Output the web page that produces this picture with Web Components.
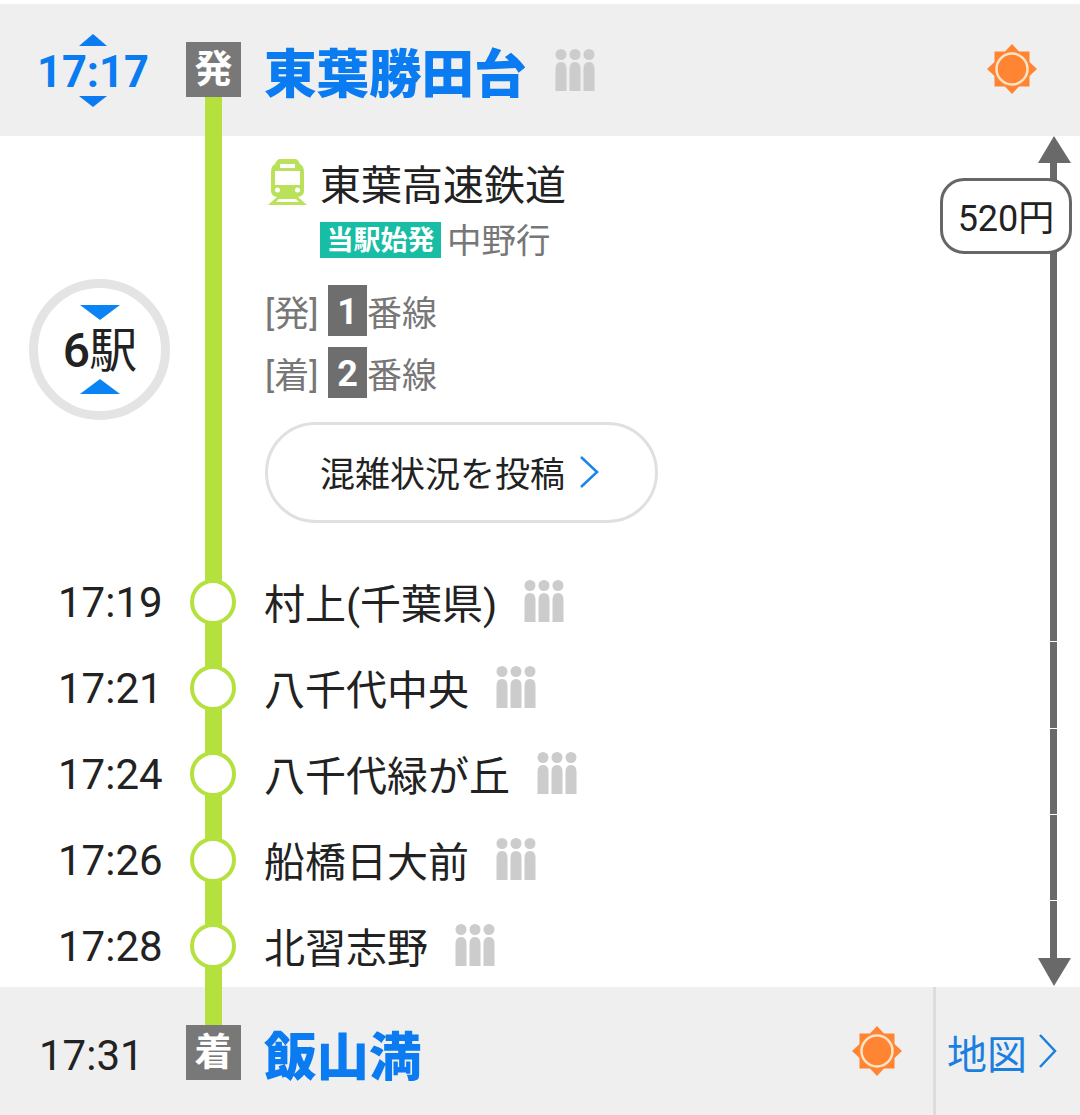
<!DOCTYPE html>
<html lang="ja">
<head>
<meta charset="utf-8">
<title>経路</title>
<style>
  html, body { margin: 0; background: #fff; }
  body { font-family: Roboto, "Noto Sans CJK JP", sans-serif; color: #222; }
</style>
</head>
<body>
<route-view>
  <station-bar kind="dep" time="17:17" badge="発" name="東葉勝田台" crowd></station-bar>
  <line-detail slot="body"></line-detail>
  <stop-row slot="body" time="17:19" name="村上(千葉県)"></stop-row>
  <stop-row slot="body" time="17:21" name="八千代中央"></stop-row>
  <stop-row slot="body" time="17:24" name="八千代緑が丘"></stop-row>
  <stop-row slot="body" time="17:26" name="船橋日大前"></stop-row>
  <stop-row slot="body" time="17:28" name="北習志野"></stop-row>
  <station-bar slot="foot" kind="arr" time="17:31" badge="着" name="飯山満"></station-bar>
</route-view>

<script>
// iconos compartidos
const SUN_SVG = `<svg width="50" height="50" viewBox="0 0 50 50" aria-hidden="true">
  <path fill="#ff8533" d="M25 0l7 7.500h10.500V18L50 25l-7.500 7v10.500H32L25 50l-7-7.500H7.500V32L0 25l7.500-7V7.500H18z"/>
  <circle cx="25" cy="25" r="15.500" fill="#ff8533" stroke="#fde3c8" stroke-width="2.500"/>
</svg>`;

class PeopleIcon extends HTMLElement {
  constructor() {
    super();
    this.attachShadow({ mode: 'open' });
    this.shadowRoot.innerHTML = `
      <style>:host { display: inline-flex; width: 40px; height: 42px; } svg { display: block; }</style>
      <svg width="40" height="42" viewBox="0 0 40 42" aria-hidden="true" fill="#ccc">
        <circle cx="6" cy="5.500" r="5.500"/><circle cx="20" cy="5.500" r="5.500"/><circle cx="34" cy="5.500" r="5.500"/>
        <path d="M.5 42V20q0-7 5.500-7t5.500 7v22z"/>
        <path d="M14.500 42V20q0-7 5.500-7t5.500 7v22z"/>
        <path d="M28.500 42V20q0-7 5.500-7t5.500 7v22z"/>
      </svg>`;
  }
}
customElements.define('people-icon', PeopleIcon);

// Barra de estacion (salida y llegada)
class StationBar extends HTMLElement {
  constructor() {
    super();
    this.attachShadow({ mode: 'open' });
  }
  connectedCallback() {
    const dep = this.getAttribute('kind') === 'dep';
    this.shadowRoot.innerHTML = `
      <style>
        :host { display: flex; align-items: center; background: #efefef; box-sizing: border-box; }
        :host([kind="dep"]) { height: 132px; margin-top: 4px; }
        :host([kind="arr"]) { height: 128px; }
        .wrap { display: flex; align-items: flex-start; flex: 1; height: 100%; box-sizing: border-box; padding-top: 38px; }
        .time { width: 186px; flex: none; box-sizing: border-box; display: flex; flex-direction: column; align-items: center; }
        :host([kind="dep"]) .time { color: #0a7bf0; font-weight: 700; font-size: 43.500px; line-height: 48px; margin-top: -8px; }
        :host([kind="arr"]) .time { font-size: 42px; line-height: 56px; margin-top: 3px; align-items: flex-start; padding-left: 39px; }
        .tri { width: 0; height: 0; border-left: 14px solid transparent; border-right: 14px solid transparent; }
        .tri.up { border-bottom: 12px solid #0a7bf0; margin-bottom: 3px; }
        .tri.down { border-top: 11px solid #0a7bf0; margin-top: -1px; }
        .badge { width: 55px; height: 55px; flex: none; background: #787878; color: #fff; font-weight: 700; font-size: 38px; line-height: 55px; text-align: center; position: relative; z-index: 2; }
        .name { margin-left: 23px; color: #0a7bf0; font-weight: 900; font-size: 52.500px; line-height: 66px; white-space: nowrap; }
        people-icon { margin-left: 28px; margin-top: 7px; }
        .sun { margin-left: auto; display: flex; margin-top: 2px; margin-right: 43px; }
        :host([kind="arr"]) .sun { margin-right: 31px; margin-top: 1px; }
        .map { width: 147px; height: 128px; margin-top: -38px; box-sizing: border-box; border-left: 3px solid #ddd; color: #1a7fe0; font-size: 40px; display: flex; align-items: center; padding: 0 0 0 11px; gap: 11px; }
        .map span { margin-top: 2px; }
      </style>
      <div class="wrap">
        <div class="time">
          ${dep ? '<span class="tri up"></span>' : ''}
          <span>${this.getAttribute('time')}</span>
          ${dep ? '<span class="tri down"></span>' : ''}
        </div>
        <div class="badge">${this.getAttribute('badge')}</div>
        <div class="name">${this.getAttribute('name')}</div>
        ${dep ? '<people-icon></people-icon>' : ''}
        <div class="sun">${SUN_SVG}</div>
        ${dep ? '' : `<div class="map"><span>地図</span>
          <svg width="19" height="36" viewBox="0 0 19 36" aria-hidden="true"><path d="M2 2l15 16L2 34" fill="none" stroke="#1a7fe0" stroke-width="2.500"/></svg></div>`}
      </div>`;
  }
}
customElements.define('station-bar', StationBar);

// Bloque de tren, andenes y boton
class LineDetail extends HTMLElement {
  constructor() {
    super();
    this.attachShadow({ mode: 'open' });
    this.shadowRoot.innerHTML = `
      <style>
        :host { display: grid; grid-template-columns: 265px 1fr; height: 423px; }
        .left { display: flex; align-items: center; padding-left: 29px; padding-top: 4px; }
        .count { width: 141px; height: 141px; box-sizing: border-box; border: 9px solid #e4e4e4; border-radius: 50%; display: flex; flex-direction: column; align-items: center; justify-content: center; background: #fff; }
        .count b { font-weight: 400; font-size: 48px; line-height: 54px; letter-spacing: -1px; padding-top: 4px; height: 59px; box-sizing: border-box; }
        .count b span { font-weight: 500; }
        .tri { width: 0; height: 0; border-left: 20px solid transparent; border-right: 20px solid transparent; }
        .tri.down { border-top: 15px solid #0a84f5; }
        .tri.up { border-bottom: 15px solid #0a84f5; }
        .right { padding-top: 21px; }
        .train { display: flex; align-items: center; height: 50px; font-size: 41px; gap: 13px; margin-left: 3px; }
        .sub { display: flex; align-items: center; margin-left: 55px; height: 36px; margin-top: 15px; color: #777; font-size: 34.500px; gap: 8px; }
        .sub .to { margin-bottom: 4px; margin-left: -2px; }
        .tag { background: #17bda4; color: #fff; font-weight: 700; font-size: 27px; line-height: 38px; height: 36px; width: 121px; text-align: center; white-space: nowrap; }
        .plats { margin-top: 22px; color: #777; font-size: 35px; }
        .plat { display: flex; align-items: center; height: 62px; }
        .plat i { font-style: normal; width: 63px; margin-top: -2px; }
        .num { width: 39px; height: 51px; margin-top: -1px; background: #6e6e6e; color: #fff; font-weight: 700; font-size: 36px; line-height: 55px; text-align: center; margin-right: 1px; }
        .lbl { margin-left: -1px; margin-top: -2px; }
        .btn { display: flex; align-items: center; width: 393px; height: 101px; margin-top: 18px; box-sizing: border-box; border: 3px solid #e0e0e0; border-radius: 51px; padding: 0 0 2px 52px; font-size: 35px; gap: 14px; white-space: nowrap; }
      </style>
      <div class="left">
        <div class="count">
          <span class="tri down"></span>
          <b><span>6</span>駅</b>
          <span class="tri up"></span>
        </div>
      </div>
      <div class="right">
        <div class="train">
          <svg width="39" height="46" viewBox="0 0 39 46" aria-hidden="true">
            <path fill="#b9e25a" d="M12 0h15q3 0 5 5q4 2 4 8v19q0 5-6 6l9 8H0l9-8q-6-1-6-6V13q0-6 4-8q2-5 5-5z"/>
            <rect x="12" y="5" width="15" height="4" fill="#fff"/>
            <rect x="7" y="12" width="25" height="14" fill="#fff"/>
            <circle cx="9.500" cy="31" r="2.500" fill="#fff"/><circle cx="29.500" cy="31" r="2.500" fill="#fff"/>
            <path fill="#fff" d="M11 40h17l3 3H8z"/>
          </svg>
          <span>東葉高速鉄道</span>
        </div>
        <div class="sub"><span class="tag">当駅始発</span><span class="to">中野行</span></div>
        <div class="plats">
          <div class="plat"><i>[発]</i><span class="num">1</span><span class="lbl">番線</span></div>
          <div class="plat"><i>[着]</i><span class="num">2</span><span class="lbl">番線</span></div>
        </div>
        <div class="btn">
          <span>混雑状況を投稿</span>
          <svg width="20" height="34" viewBox="0 0 20 34" aria-hidden="true"><path d="M2 2l16 15L2 32" fill="none" stroke="#1a85e8" stroke-width="2.500"/></svg>
        </div>
      </div>`;
  }
}
customElements.define('line-detail', LineDetail);

// Fila de parada intermedia
class StopRow extends HTMLElement {
  constructor() {
    super();
    this.attachShadow({ mode: 'open' });
  }
  connectedCallback() {
    this.shadowRoot.innerHTML = `
      <style>
        :host { display: flex; align-items: center; height: 86px; }
        .time { width: 132px; margin-left: 58px; font-size: 42px; white-space: nowrap; }
        .node { width: 46px; height: 46px; flex: none; box-sizing: border-box; border: 4px solid #b5e13f; border-radius: 50%; background: #fff; position: relative; z-index: 2; }
        .name { margin-left: 28px; font-size: 41px; white-space: nowrap; margin-top: -3px; }
        people-icon { margin-left: 27px; margin-top: -3px; }
      </style>
      <div class="time">${this.getAttribute('time')}</div>
      <div class="node"></div>
      <div class="name">${this.getAttribute('name')}</div>
      <people-icon></people-icon>`;
  }
}
customElements.define('stop-row', StopRow);

// Flecha de tarifa, va encima del contenido
class FareArrow extends HTMLElement {
  constructor() {
    super();
    this.attachShadow({ mode: 'open' });
    const ticks = [505, 592, 678, 764].map(y => `<rect x="12" y="${y}" width="7" height="1" fill="#fff"/>`).join('');
    this.shadowRoot.innerHTML = `
      <style>
        :host { display: block; position: absolute; top: 136px; left: 1038px; width: 33px; height: 851px; z-index: 3; }
        svg { display: block; }
        .fare { position: absolute; top: 42px; right: -1px; width: 132px; height: 76px; box-sizing: border-box; border: 3px solid #666; border-radius: 24px; padding-bottom: 3px; background: #fff; font-size: 36px; display: flex; align-items: center; justify-content: center; white-space: nowrap; }
      </style>
      <svg width="33" height="851" viewBox="0 0 33 851" aria-hidden="true">
        <rect x="12" y="26" width="7" height="798" fill="#696969"/>
        ${ticks}
        <path fill="#696969" d="M16 0L33 27H0z"/>
        <path fill="#696969" d="M16 850L33 822H0z"/>
      </svg>
      <div class="fare">520円</div>`;
  }
}
customElements.define('fare-arrow', FareArrow);

class RouteView extends HTMLElement {
  constructor() {
    super();
    this.attachShadow({ mode: 'open' });
    this.shadowRoot.innerHTML = `
      <style>
        :host { display: block; position: relative; width: 1080px; height: 1115px; overflow: hidden; }
        .line { position: absolute; left: 205px; top: 70px; width: 17px; height: 960px; background: #b5e13f; z-index: 1; }
        .body { height: 851px; overflow: hidden; }
      </style>
      <div class="line"></div>
      <slot></slot>
      <div class="body"><slot name="body"></slot></div>
      <slot name="foot"></slot>
      <fare-arrow></fare-arrow>`;
  }
}
customElements.define('route-view', RouteView);
</script>
</body>
</html>
